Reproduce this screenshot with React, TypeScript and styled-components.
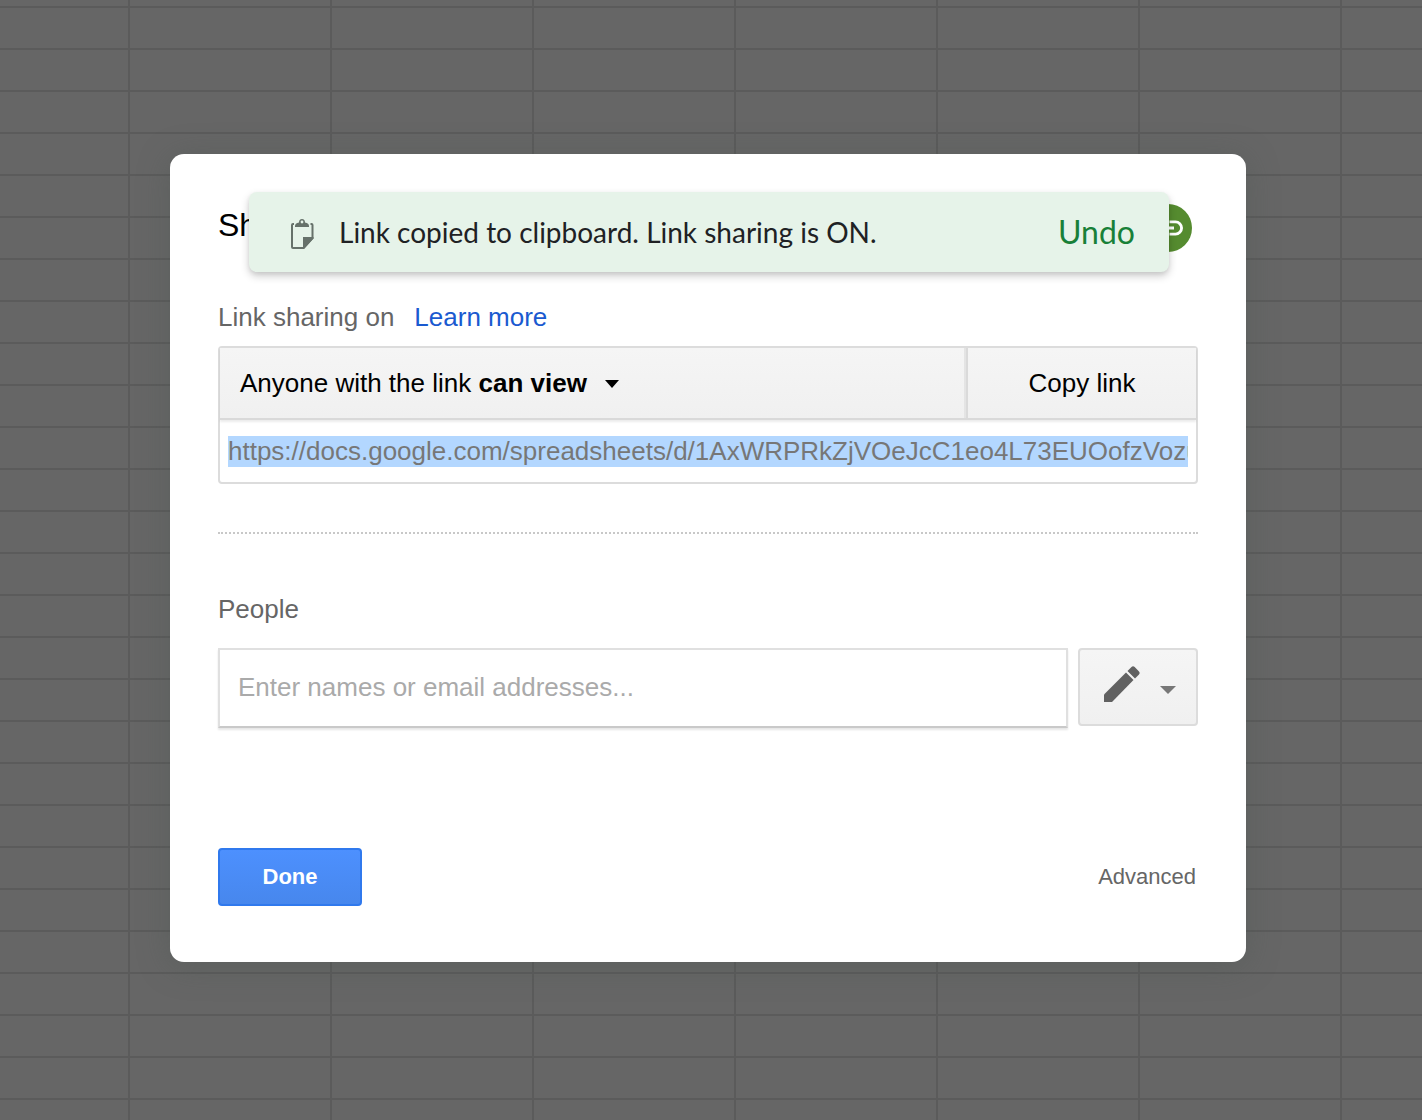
import React, { useEffect, useRef } from "react";
import styled, { createGlobalStyle } from "styled-components";

const GlobalStyle = createGlobalStyle`
  *, *::before, *::after { box-sizing: border-box; }
  body { margin: 0; background: #666; }
  body, button, input {
    font-family: "Liberation Sans", Arial, sans-serif;
    font-size: 26px;
    line-height: 30px;
  }
`;

const Sheet = styled.div`
  min-height: 100vh;
  display: flex;
  align-items: center;
  justify-content: center;
  padding: 16px 22px 20px 16px;
  background-color: #666;
  background-image:
    linear-gradient(90deg, #5b5b5b 2px, transparent 2px),
    linear-gradient(#5b5b5b 2px, transparent 2px);
  background-size: 202px 42px;
  background-position: 128px 6px;
`;

const Dialog = styled.main`
  position: relative;
  width: 100%;
  max-width: 1076px;
  padding: 50px 48px 56px;
  border-radius: 14px;
  background: #fff;
  box-shadow: 0 4px 32px rgba(76, 86, 80, 0.4);
`;

const Header = styled.header`
  display: flex;
  align-items: center;
  justify-content: space-between;
  height: 48px;
  padding-right: 6px;
  margin-bottom: 50px;
`;

const Title = styled.h1`
  margin: 0;
  padding-bottom: 6px;
  font-size: 32px;
  line-height: 36px;
  font-weight: 400;
  color: #000;
`;

const LinkBadge = styled.button`
  display: grid;
  place-items: center;
  width: 48px;
  height: 48px;
  padding: 0;
  border: 0;
  border-radius: 50%;
  background: #558b2f;
`;

const Toast = styled.div`
  position: absolute;
  top: 38px;
  left: 79px;
  right: 77px;
  display: flex;
  align-items: center;
  gap: 24px;
  height: 80px;
  padding: 0 34px 0 40px;
  border-radius: 8px;
  background: #e6f3e9;
  color: #202124;
  box-shadow: 0 4px 8px rgba(0, 0, 0, 0.2), 0 2px 4px rgba(0, 0, 0, 0.06);
`;

const ToastText = styled.span`
  flex: 1;
  font-family: Lato, sans-serif;
  font-size: 28px;
  line-height: 36px;
`;

const UndoButton = styled.button`
  padding: 0;
  border: 0;
  background: none;
  color: #188038;
  font-family: Lato, sans-serif;
  font-size: 32px;
  line-height: 36px;
`;

const SharingLine = styled.div`
  display: flex;
  gap: 20px;
  margin-bottom: 14px;
  color: #666;
`;

const LearnMore = styled.a`
  color: #1a5ad0;
  text-decoration: none;
`;

const LinkBox = styled.section`
  border: 2px solid #dcdcdc;
  border-radius: 4px;
`;

const LinkActions = styled.div`
  display: flex;
  height: 72px;
  border-bottom: 2px solid #d9d9d9;
  background: linear-gradient(#f5f5f5, #f0f0f0);
  box-shadow: 0 2px 2px rgba(0, 0, 0, 0.08);
`;

const FlatButton = styled.button`
  display: flex;
  align-items: center;
  padding: 0;
  border: 0;
  background: none;
  color: #000;
`;

const AccessButton = styled(FlatButton)`
  flex: 1;
  gap: 18px;
  padding-left: 20px;
  border-right: 2px solid #e4e4e4;
`;

const CopyButton = styled(FlatButton)`
  width: 230px;
  justify-content: center;
  border-left: 2px solid #dadada;
`;

const UrlField = styled.input`
  display: block;
  width: 100%;
  height: 62px;
  padding: 0 8px;
  border: 0;
  outline: 0;
  background: transparent;
  color: #777;
  &::selection { background: #b3d7ff; color: #777; }
`;

const Divider = styled.hr`
  margin: 48px 0 60px;
  border: 0;
  border-top: 2px dotted #c8c8c8;
`;

const PeopleLabel = styled.label`
  display: block;
  margin-bottom: 24px;
  color: #666;
`;

const InviteRow = styled.div`
  display: flex;
  align-items: flex-start;
  gap: 10px;
  margin-bottom: 120px;
`;

const PeopleInput = styled.input`
  flex: 1;
  min-width: 0;
  height: 80px;
  padding: 0 18px 2px;
  border: 2px solid #e0e0e0;
  border-bottom-color: #c9c9c9;
  outline: 0;
  background: #fff;
  color: #333;
  box-shadow: 0 2px 2px rgba(0, 0, 0, 0.1);
  &::placeholder { color: #aaa; opacity: 1; }
`;

const RoleButton = styled.button`
  display: flex;
  align-items: center;
  gap: 18px;
  width: 120px;
  height: 78px;
  padding: 0 16px 4px 22px;
  border: 2px solid #dcdcdc;
  border-radius: 4px;
  background: linear-gradient(#f5f5f5, #f0f0f0);
  color: #777;
`;

const Footer = styled.footer`
  display: flex;
  align-items: center;
  justify-content: space-between;
  padding-right: 2px;
`;

const DoneButton = styled.button`
  width: 144px;
  height: 58px;
  padding: 0;
  border: 2px solid #3079ed;
  border-radius: 4px;
  background: linear-gradient(#4d90fe, #4787ed);
  color: #fff;
  font-size: 22px;
  font-weight: 700;
`;

const AdvancedLink = styled.a`
  color: #666;
  font-size: 22px;
  text-decoration: none;
`;

const ClipboardIcon = () => (
  <svg width="26" height="36" viewBox="0 0 26 36" aria-hidden="true">
    <path
      d="M5 10H4Q3 10 3 11V33Q3 34 4 34H14.500L23.500 24V11Q23.500 10 22.500 10H21.500"
      fill="none"
      stroke="#66716a"
      strokeWidth="2"
    />
    <path d="M14 35V23H24.500V24.500L15 35Z" fill="#66716a" />
    <path d="M6 13V12Q6 9 10 8.500Q10 5 13 5Q16 5 16 8.500Q20 9 20 12V13Z" fill="#66716a" />
    <circle cx="13" cy="8" r="1.400" fill="#e6f3e9" />
  </svg>
);

const ChainIcon = () => (
  <svg width="36" height="36" viewBox="0 0 24 24" fill="#fff" aria-hidden="true">
    <path d="M3.900 12c0-1.710 1.390-3.100 3.100-3.100h4V7H7a5 5 0 0 0 0 10h4v-1.900H7A3.100 3.100 0 0 1 3.900 12zM8 13h8v-2H8v2zm9-6h-4v1.900h4a3.100 3.100 0 0 1 0 6.200h-4V17h4a5 5 0 0 0 0-10z" />
  </svg>
);

const PencilIcon = () => (
  <svg width="40" height="40" viewBox="0 0 40 40" fill="#616161" aria-hidden="true">
    <path d="M2 29.500L24 7.500L31.500 15L10 37H2Z" />
    <path d="M25.500 6L29.500 2Q31 .5 32.700 2L37 6.500Q38.500 8 37 9.500L33 13.500Z" />
  </svg>
);

const Caret = ({ width, drop }: { width: number; drop: number }) => (
  <svg
    width={width}
    height={8 + drop * 2}
    viewBox={`0 0 ${width} ${8 + drop * 2}`}
    fill="currentColor"
    aria-hidden="true"
  >
    <path d={`M0 ${drop * 2}H${width}L${width / 2} ${8 + drop * 2}Z`} />
  </svg>
);

export default function App() {
  const urlRef = useRef<HTMLInputElement>(null);

  useEffect(() => {
    const field = urlRef.current;
    if (!field) return;
    field.focus();
    field.setSelectionRange(0, field.value.length, "backward");
    // Keep the start of the address in view while all of it is selected.
    const frame = requestAnimationFrame(() => {
      field.scrollLeft = 0;
    });
    return () => cancelAnimationFrame(frame);
  }, []);

  return (
    <>
      <GlobalStyle />
      <Sheet>
        <Dialog>
          <Header>
            <Title>Share</Title>
            <LinkBadge type="button" aria-label="Get shareable link">
              <ChainIcon />
            </LinkBadge>
          </Header>
          <SharingLine>
            <span>Link sharing on</span>
            <LearnMore href="#learn-more">Learn more</LearnMore>
          </SharingLine>
          <LinkBox>
            <LinkActions>
              <AccessButton type="button" aria-haspopup="listbox">
                <span>
                  Anyone with the link <b>can view</b>
                </span>
                <Caret width={14} drop={1} />
              </AccessButton>
              <CopyButton type="button">Copy link</CopyButton>
            </LinkActions>
            <UrlField
              ref={urlRef}
              readOnly
              aria-label="Shareable link"
              value="https://docs.google.com/spreadsheets/d/1AxWRPRkZjVOeJcC1eo4L73EUOofzVozu"
            />
          </LinkBox>
          <Divider />
          <PeopleLabel htmlFor="people">People</PeopleLabel>
          <InviteRow>
            <PeopleInput id="people" type="text" placeholder="Enter names or email addresses..." />
            <RoleButton type="button" aria-label="Can edit" aria-haspopup="menu">
              <PencilIcon />
              <Caret width={16} drop={5} />
            </RoleButton>
          </InviteRow>
          <Footer>
            <DoneButton type="button">Done</DoneButton>
            <AdvancedLink href="#advanced">Advanced</AdvancedLink>
          </Footer>
          <Toast role="status">
            <ClipboardIcon />
            <ToastText>Link copied to clipboard. Link sharing is ON.</ToastText>
            <UndoButton type="button">Undo</UndoButton>
          </Toast>
        </Dialog>
      </Sheet>
    </>
  );
}
